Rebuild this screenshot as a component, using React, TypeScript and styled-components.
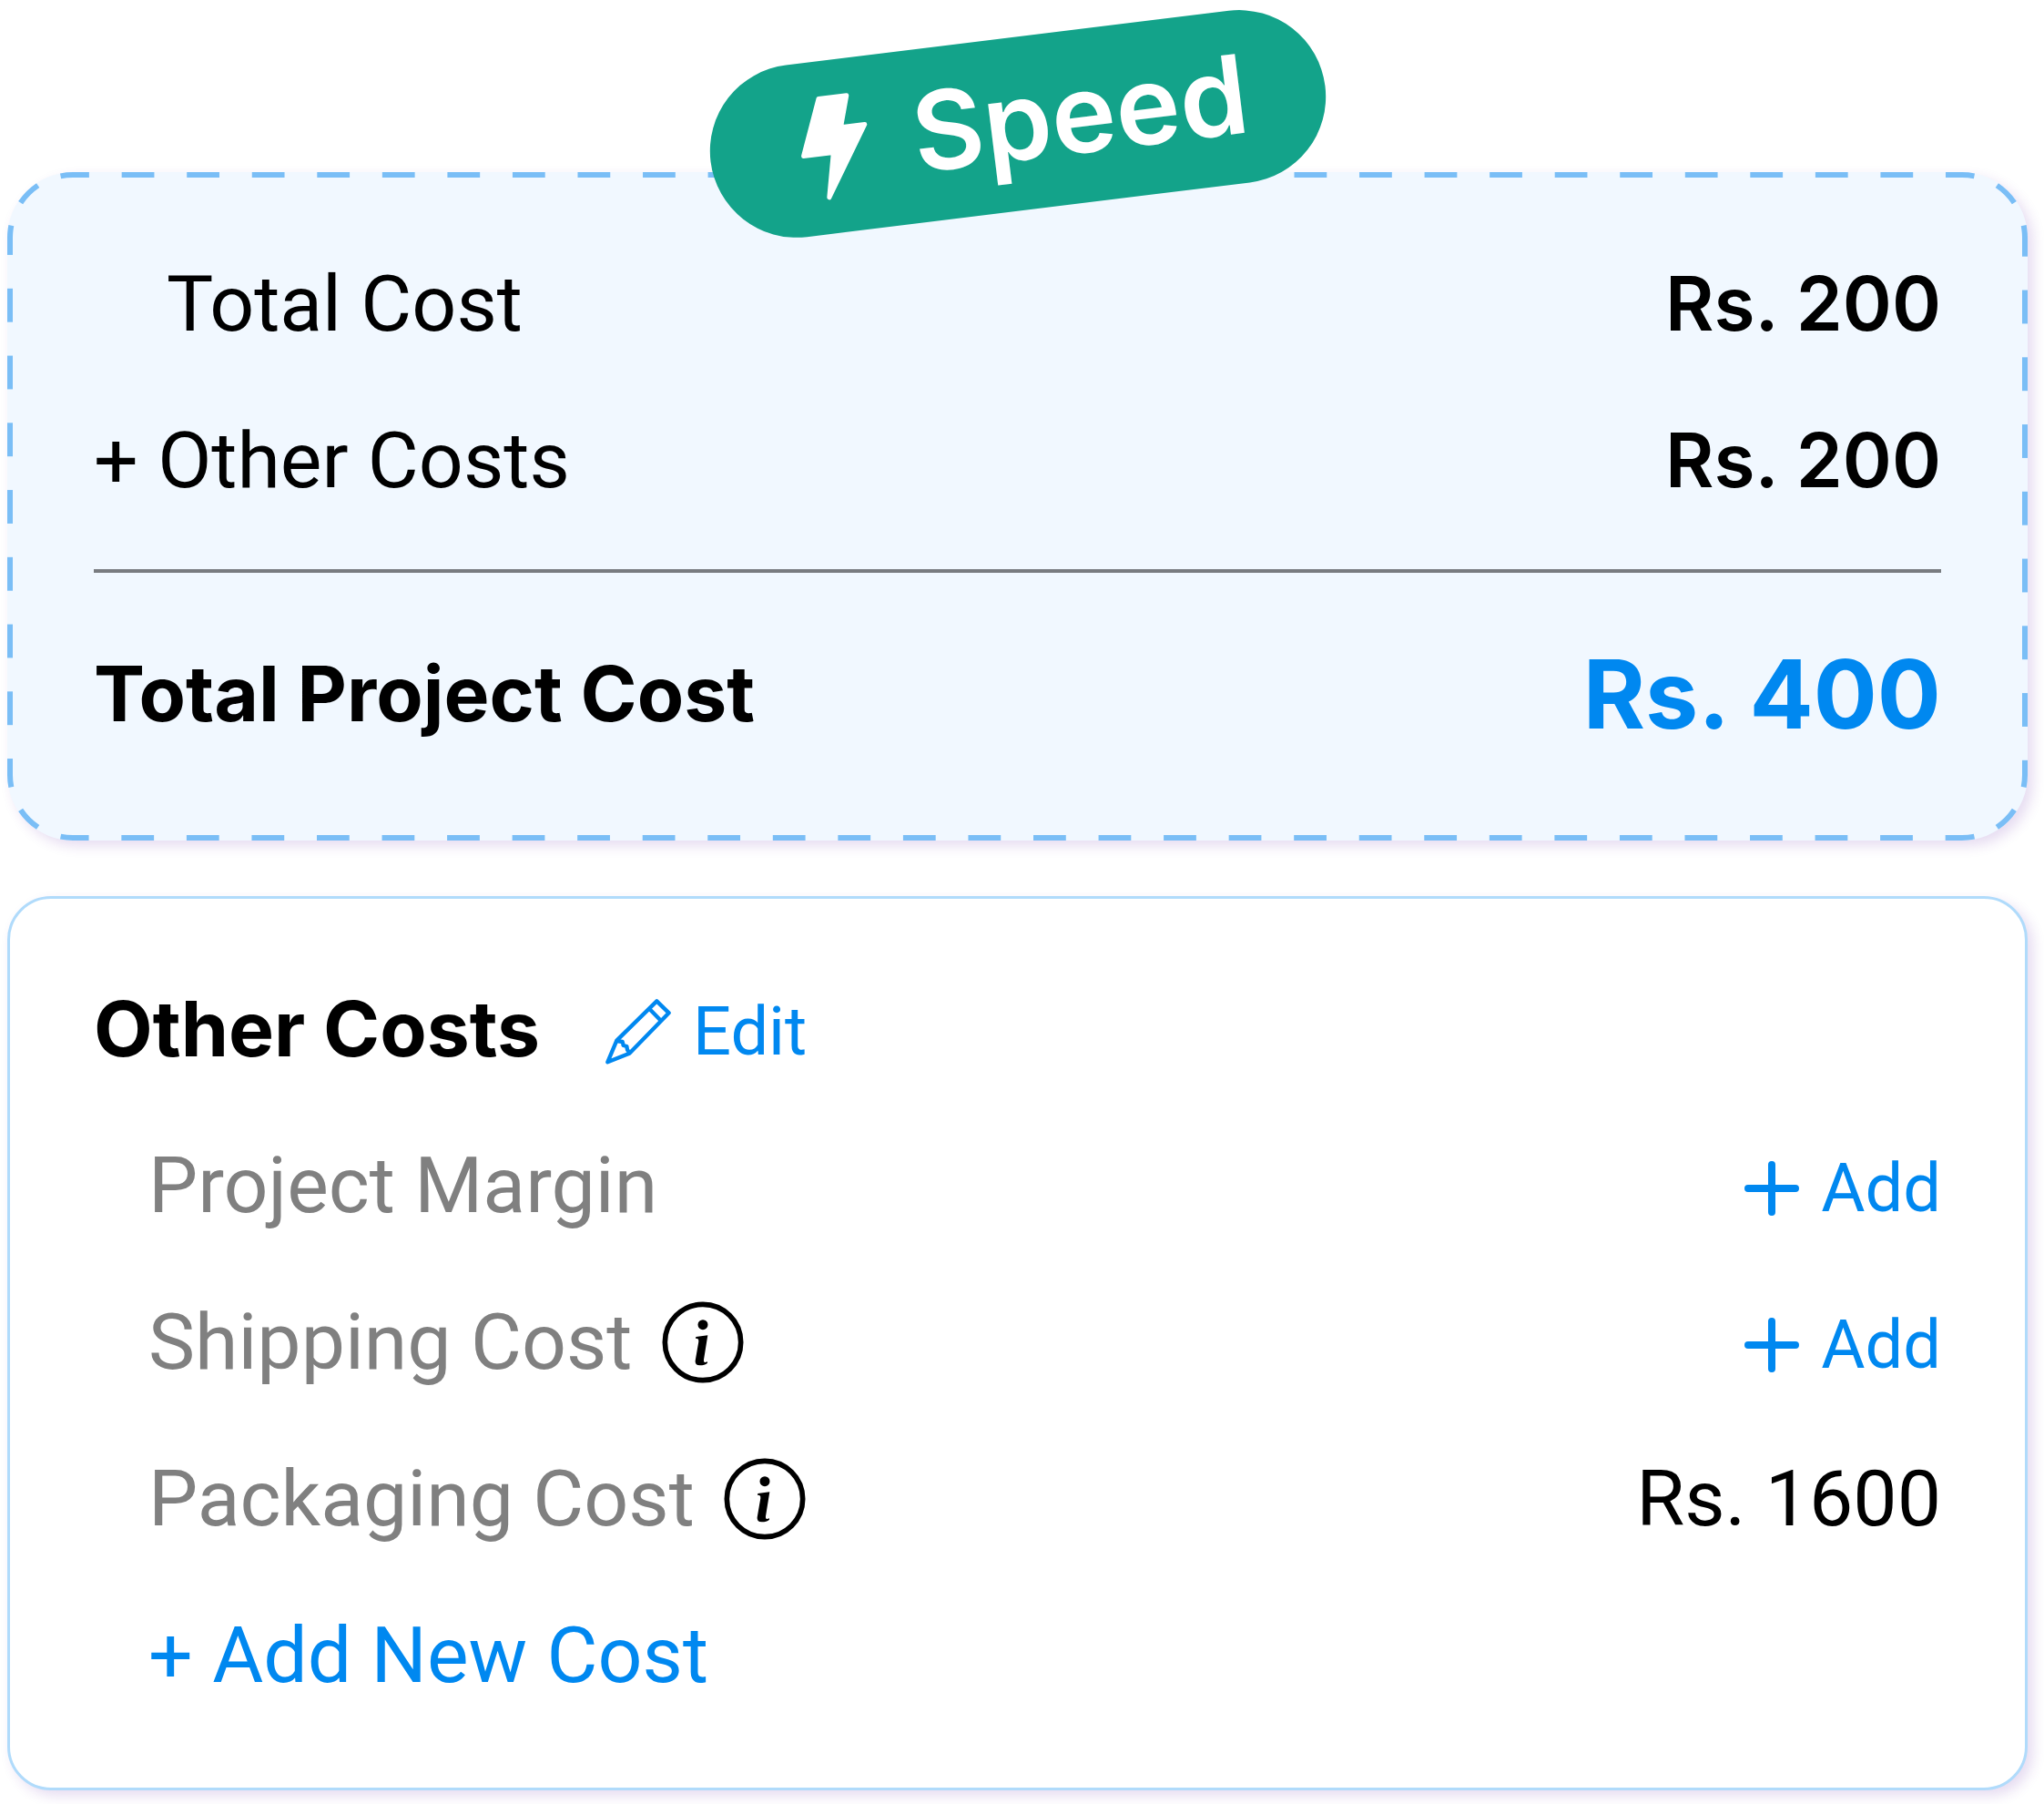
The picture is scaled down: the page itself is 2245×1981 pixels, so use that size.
import React from "react";
import styled, { createGlobalStyle, css } from "styled-components";

const color = {
  ink: "#000000",
  muted: "#808080",
  blue: "#0088f0",
  dash: "#7abef6",
  outline: "#b0dbfb",
  tint: "#f1f8ff",
  rule: "#797c80",
  green: "#13a38a",
};

const displayFont = `Inter, "Liberation Sans", sans-serif`;

const GlobalStyle = createGlobalStyle`
  * { box-sizing: border-box; }
  body {
    margin: 0;
    background: #ffffff;
    color: ${color.ink};
    font-family: Roboto, "Liberation Sans", sans-serif;
  }
`;

const Page = styled.main`
  display: flex;
  flex-direction: column;
  padding: 41px 18px 16px 8px;
`;

const SpeedPill = styled.div`
  position: relative;
  z-index: 1;
  align-self: center;
  display: flex;
  align-items: center;
  gap: 46px;
  height: 190px;
  margin-bottom: -42px;
  padding: 0 86px 6px 98px;
  border-radius: 95px;
  background: ${color.green};
  color: #ffffff;
  font: 600 120px/1 ${displayFont};
  transform: rotate(-7deg);
`;

const cardBase = css`
  box-shadow: 6px 6px 14px rgba(98, 40, 170, 0.16);
`;

const SummaryCard = styled.section`
  ${cardBase}
  position: relative;
  padding: 59px 95px 75px;
  border-radius: 72px;
  background: ${color.tint};
`;

const DetailCard = styled.section`
  ${cardBase}
  margin-top: 61px;
  padding: 57px 92px 59px;
  border: 3px solid ${color.outline};
  border-radius: 48px;
  background: #ffffff;
`;

/* Dashed outline: four evenly divided edges joined by four dashed corners. */
const Frame = styled.div`
  position: absolute;
  inset: 0;
  display: grid;
  grid-template: 72px 1fr 72px / 72px 1fr 72px;
  pointer-events: none;
`;

const Edge = styled.span<{ $vertical?: boolean; $end?: boolean }>`
  background-image: linear-gradient(
    ${(p) => (p.$vertical ? "180deg" : "90deg")},
    ${color.dash} 25%,
    transparent 25% 75%,
    ${color.dash} 75%
  );
  background-size: ${(p) => (p.$vertical ? "6px 72px" : "72px 6px")};
  background-repeat: ${(p) => (p.$vertical ? "no-repeat round" : "round no-repeat")};
  background-position: ${(p) => (p.$end ? "right bottom" : "left top")};
`;

const CornerArc = styled.svg<{ $turn: number }>`
  width: 72px;
  height: 72px;
  transform: rotate(${(p) => p.$turn}deg);
`;

const Row = styled.div<{ $indent?: number }>`
  display: flex;
  align-items: center;
  justify-content: space-between;
  height: 172px;
  padding-left: ${(p) => p.$indent ?? 0}px;
  font-size: 86px;
  line-height: 100px;
  white-space: nowrap;
`;

const Group = styled.div<{ $gap: number }>`
  display: flex;
  align-items: center;
  gap: ${(p) => p.$gap}px;
`;

const Label = styled.span<{ $muted?: boolean }>`
  color: ${(p) => (p.$muted ? color.muted : color.ink)};
`;

const Title = styled.h2`
  margin: 0;
  font-family: ${displayFont};
  font-size: 84px;
  font-weight: 700;
`;

const Amount = styled.span``;

const StrongAmount = styled.strong`
  font-family: ${displayFont};
  font-size: 82px;
  font-weight: 600;
`;

const GrandTotal = styled.strong`
  color: ${color.blue};
  font-family: ${displayFont};
  font-size: 104px;
  font-weight: 700;
`;

const Rule = styled.hr`
  width: 100%;
  height: 4px;
  margin: 33px 0 47px;
  border: 0;
  background: ${color.rule};
`;

const Action = styled.button<{ $large?: boolean }>`
  display: flex;
  align-items: center;
  gap: 24px;
  padding: ${(p) => (p.$large ? 0 : 6)}px 0 0;
  border: 0;
  background: none;
  color: ${color.blue};
  font: inherit;
  font-size: ${(p) => (p.$large ? 86 : 74)}px;
  cursor: pointer;
`;

const InfoButton = styled.button`
  display: flex;
  padding: 0;
  border: 0;
  background: none;
  color: ${color.ink};
  cursor: pointer;
`;

const Corner = ({ turn }: { turn: number }) => (
  <CornerArc $turn={turn} viewBox="0 0 72 72">
    <path
      d="M3 72A69 69 0 0 1 72 3"
      pathLength={8}
      fill="none"
      stroke={color.dash}
      strokeWidth="6"
      strokeDasharray="2 2"
      strokeDashoffset="1"
    />
  </CornerArc>
);

const DashedFrame = () => (
  <Frame aria-hidden="true">
    <Corner turn={0} />
    <Edge />
    <Corner turn={90} />
    <Edge $vertical />
    <span />
    <Edge $vertical $end />
    <Corner turn={270} />
    <Edge $end />
    <Corner turn={180} />
  </Frame>
);

const Bolt = () => (
  <svg width="80" height="124" viewBox="-242 -66 80 124" aria-hidden="true">
    <path
      d="M-214 -55H-183L-193.500 -21H-167L-215.500 54L-205 5.500H-238Z"
      fill="#fff"
      stroke="#fff"
      strokeWidth="5"
      strokeLinejoin="round"
    />
  </svg>
);

const Pencil = () => (
  <svg width="72" height="72" viewBox="66 111 216 216" fill="none" stroke="currentColor" strokeWidth="13" strokeLinejoin="round" strokeLinecap="round" aria-hidden="true">
    <path d="M73 319L103 248L235 118L275 157L145 290Z" />
    <path d="M212 145L247 181" />
    <path d="M104 249L122 252L125 264L136 267L138 278L145 288" />
  </svg>
);

const Plus = () => (
  <svg width="60" height="60" viewBox="0 0 60 60" stroke="currentColor" strokeWidth="8" strokeLinecap="round" aria-hidden="true">
    <path d="M4 30H56M30 4V56" />
  </svg>
);

const Info = ({ about }: { about: string }) => (
  <InfoButton type="button" aria-label={`About ${about}`}>
    <svg width="90" height="90" viewBox="100 89 270 270" aria-hidden="true">
      <circle cx="235" cy="224" r="125" fill="none" stroke="currentColor" strokeWidth="17" />
      <circle cx="235" cy="166" r="16.500" fill="currentColor" />
      <path
        d="M212 206L251 201L238 281Q237 291 243 290L250 288V292Q241 300 225 300Q208 300 210 285L221 222Q222 213 217 212L211 211Z"
        fill="currentColor"
      />
    </svg>
  </InfoButton>
);

const AddButton = () => (
  <Action type="button">
    <Plus />
    Add
  </Action>
);

export default function App() {
  return (
    <>
      <GlobalStyle />
      <Page>
        <SpeedPill>
          <Bolt />
          Speed
        </SpeedPill>

        <SummaryCard>
          <DashedFrame />
          <Row $indent={80}>
            <Label>Total Cost</Label>
            <StrongAmount>Rs. 200</StrongAmount>
          </Row>
          <Row>
            <Label>+ Other Costs</Label>
            <StrongAmount>Rs. 200</StrongAmount>
          </Row>
          <Rule />
          <Row>
            <Title>Total Project Cost</Title>
            <GrandTotal>Rs. 400</GrandTotal>
          </Row>
        </SummaryCard>

        <DetailCard>
          <Row>
            <Group $gap={72}>
              <Title>Other Costs</Title>
              <Action type="button">
                <Pencil />
                Edit
              </Action>
            </Group>
          </Row>
          <Row $indent={60}>
            <Label $muted>Project Margin</Label>
            <AddButton />
          </Row>
          <Row $indent={60}>
            <Group $gap={32}>
              <Label $muted>Shipping Cost</Label>
              <Info about="shipping cost" />
            </Group>
            <AddButton />
          </Row>
          <Row $indent={60}>
            <Group $gap={32}>
              <Label $muted>Packaging Cost</Label>
              <Info about="packaging cost" />
            </Group>
            <Amount>Rs. 1600</Amount>
          </Row>
          <Row $indent={60}>
            <Action type="button" $large>
              + Add New Cost
            </Action>
          </Row>
        </DetailCard>
      </Page>
    </>
  );
}
